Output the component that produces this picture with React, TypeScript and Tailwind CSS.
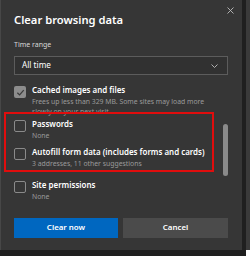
import React from "react";

const font = { fontFamily: '"Noto Sans", "Open Sans", sans-serif' };

function Check({ checked }: { checked?: boolean }) {
  return checked ? (
    <div className="w-[12px] h-[12px] rounded-[2px] bg-[#8c8c8c] flex items-center justify-center shrink-0">
      <svg width="9" height="9" viewBox="0 0 10 10">
        <path d="M1.5 5.2 L4 7.6 L8.6 2.4" fill="none" stroke="#3a3a3a" strokeWidth="1.4" />
      </svg>
    </div>
  ) : (
    <div className="w-[12px] h-[12px] rounded-[2px] border border-[#8a8a8a] shrink-0" />
  );
}

function Item({
  checked,
  title,
  sub,
  className,
}: {
  checked?: boolean;
  title: string;
  sub: React.ReactNode;
  className?: string;
}) {
  return (
    <div className={"flex gap-[6px] " + (className ?? "")}>
      <div className="pt-[2px]"><Check checked={checked} /></div>
      <div className="flex flex-col">
        <div className="text-[7.95px] leading-[13px] font-semibold text-white whitespace-nowrap">{title}</div>
        <div className="text-[6.85px] leading-[10px] text-[#9b9b9b] whitespace-nowrap">{sub}</div>
      </div>
    </div>
  );
}

export default function App() {
  return (
    <div className="w-[250px] h-[259px] bg-white relative overflow-hidden" style={font}>
      <div className="absolute right-0 top-0 w-[4px] h-[250px] bg-[#3a3a3a]" />
      <div className="w-[246px] h-[256px] bg-[#1f1f1f]">
        <div className="w-[242px] h-[250px] bg-[#363636] relative border-l border-[#474747]">
          <svg className="absolute left-[226px] top-[7px]" width="7" height="7" viewBox="0 0 7 7">
            <path d="M0.5 0.5 L6.5 6.5 M6.5 0.5 L0.5 6.5" stroke="#bdbdbd" strokeWidth="0.9" />
          </svg>
          <div className="absolute left-[222px] top-[124px] w-[5px] h-[52px] rounded-full bg-[#8a8a8a]" />
          <div className="absolute left-[3px] top-[112px] w-[210px] h-[60px] border-2 border-[#e00d0d]" />
          <div className="pl-[13px] pr-[14px] flex flex-col">
            <div className="pt-[13px] text-[11.2px] leading-[14px] font-semibold text-white whitespace-nowrap">Clear browsing data</div>
            <div className="mt-[13px] text-[7px] leading-[10px] text-[#d8d8d8]">Time range</div>
            <div className="mt-[6px] h-[19px] w-[214px] border border-[#5c5c5c] bg-[#313131] flex items-center justify-between pl-[7px] pr-[9px]">
              <span className="text-[8.2px] text-white">All time</span>
              <svg width="7" height="4" viewBox="0 0 7 4">
                <path d="M0.5 0.5 L3.5 3.5 L6.5 0.5" fill="none" stroke="#bdbdbd" strokeWidth="0.9" />
              </svg>
            </div>
            <div className="mt-[9px] flex flex-col">
              <Item
                checked
                title="Cached images and files"
                sub={<>Frees up less than 329 MB. Some sites may load more<br />slowly on your next visit.</>}
              />
              <Item className="mt-[1px]" title="Passwords" sub="None" />
              <Item
                className="mt-[5px]"
                title="Autofill form data (includes forms and cards)"
                sub="3 addresses, 11 other suggestions"
              />
              <Item className="mt-[10px]" title="Site permissions" sub="None" />
            </div>
            <div className="mt-[16px] flex gap-[5px]">
              <div className="w-[104px] h-[20px] bg-[#0067c0] flex items-center justify-center text-[7.9px] font-semibold text-white">Clear now</div>
              <div className="w-[105px] h-[20px] bg-[#4b4b4b] flex items-center justify-center text-[7.9px] font-semibold text-white">Cancel</div>
            </div>
          </div>
        </div>
      </div>
    </div>
  );
}
